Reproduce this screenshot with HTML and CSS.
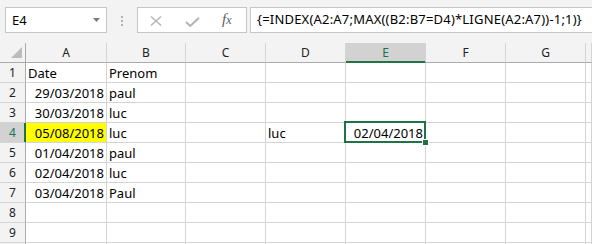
FILE: index.html
```html
<!DOCTYPE html>
<html lang="fr">
  <head>
    <meta charset="UTF-8">
    <title>Classeur1 - Excel</title>
    <link rel="stylesheet" href="styles.css">
  </head>
  <body>
    <div class="formula-bar">
      <div class="name-box">
        <span class="name-value">E4</span>
        <svg class="caret" width="7" height="4" viewBox="0 0 7 4"><path d="M0 0h7L3.5 4z" fill="#7b7b7b"/></svg>
      </div>
      <div class="grip"><i></i><i></i><i></i></div>
      <div class="fn-buttons">
        <svg class="btn-cancel" width="12" height="10" viewBox="0 0 12 10">
          <path d="M1 0.5L11 9.5M11 0.5L1 9.5" stroke="#b4b4b4" stroke-width="1.4" fill="none"/>
        </svg>
        <svg class="btn-enter" width="15" height="10" viewBox="0 0 15 10">
          <path d="M1 5L5.3 9L14 0.8" stroke="#b4b4b4" stroke-width="2" fill="none"/>
        </svg>
        <span class="fx">f<small>x</small></span>
      </div>
      <div class="formula">{=INDEX(A2:A7;MAX((B2:B7=D4)*LIGNE(A2:A7))-1;1)}</div>
    </div>

    <div class="sheet">
      <div class="hd corner">
        <svg width="26" height="19" viewBox="0 0 26 19"><path d="M22 4V15H11z" fill="#bcbcbc"/></svg>
      </div>
      <div class="hd">A</div>
      <div class="hd">B</div>
      <div class="hd">C</div>
      <div class="hd">D</div>
      <div class="hd sel-col">E</div>
      <div class="hd">F</div>
      <div class="hd">G</div>
      <div class="hd"></div>

      <div class="rh">1</div>
      <div class="cell">Date</div>
      <div class="cell">Prenom</div>
      <div class="cell"></div><div class="cell"></div><div class="cell"></div><div class="cell"></div><div class="cell"></div><div class="cell"></div>

      <div class="rh">2</div>
      <div class="cell num">29/03/2018</div>
      <div class="cell">paul</div>
      <div class="cell"></div><div class="cell"></div><div class="cell"></div><div class="cell"></div><div class="cell"></div><div class="cell"></div>

      <div class="rh">3</div>
      <div class="cell num">30/03/2018</div>
      <div class="cell">luc</div>
      <div class="cell"></div><div class="cell"></div><div class="cell"></div><div class="cell"></div><div class="cell"></div><div class="cell"></div>

      <div class="rh sel-row">4</div>
      <div class="cell num hl">05/08/2018</div>
      <div class="cell">luc</div>
      <div class="cell"></div>
      <div class="cell">luc</div>
      <div class="cell num active">02/04/2018<div class="cursor"><i class="handle"></i></div></div>
      <div class="cell"></div><div class="cell"></div><div class="cell"></div>

      <div class="rh">5</div>
      <div class="cell num">01/04/2018</div>
      <div class="cell">paul</div>
      <div class="cell"></div><div class="cell"></div><div class="cell"></div><div class="cell"></div><div class="cell"></div><div class="cell"></div>

      <div class="rh">6</div>
      <div class="cell num">02/04/2018</div>
      <div class="cell">luc</div>
      <div class="cell"></div><div class="cell"></div><div class="cell"></div><div class="cell"></div><div class="cell"></div><div class="cell"></div>

      <div class="rh">7</div>
      <div class="cell num">03/04/2018</div>
      <div class="cell">Paul</div>
      <div class="cell"></div><div class="cell"></div><div class="cell"></div><div class="cell"></div><div class="cell"></div><div class="cell"></div>

      <div class="rh">8</div>
      <div class="cell"></div><div class="cell"></div><div class="cell"></div><div class="cell"></div><div class="cell"></div><div class="cell"></div><div class="cell"></div><div class="cell"></div>

      <div class="rh">9</div>
      <div class="cell"></div><div class="cell"></div><div class="cell"></div><div class="cell"></div><div class="cell"></div><div class="cell"></div><div class="cell"></div><div class="cell"></div>

      <div class="rh"></div>
      <div class="cell"></div><div class="cell"></div><div class="cell"></div><div class="cell"></div><div class="cell"></div><div class="cell"></div><div class="cell"></div><div class="cell"></div>
    </div>
  </body>
</html>
```

FILE: styles.css
```css
* {
  box-sizing: border-box;
  margin: 0;
  padding: 0;
}

body {
  width: 592px;
  height: 244px;
  overflow: hidden;
  background: #f3f3f3;
  font-family: "Noto Sans", sans-serif;
  color: #000;
}

/* formula bar */
.formula-bar {
  display: flex;
  align-items: flex-start;
  height: 43px;
  padding: 7px 0 0 5px;
}

.name-box {
  display: flex;
  align-items: center;
  width: 102px;
  height: 26px;
  padding-left: 6px;
  background: #fff;
  border: 1px solid #c6c6c6;
  font-size: 13px;
  line-height: 23px;
}

.name-value {
  flex: 1;
}

.caret {
  margin: -1px 6px 0 0;
}

.grip {
  display: flex;
  flex-direction: column;
  gap: 2px;
  margin: 9px 14px 0 14px;
}

.grip i {
  width: 2px;
  height: 2px;
  background: #b3b3b3;
}

.fn-buttons {
  display: flex;
  align-items: flex-start;
  width: 110px;
  height: 26px;
  padding-left: 12px;
  background: #fff;
  border: 1px solid #c6c6c6;
}

.btn-cancel {
  margin-top: 8px;
}

.btn-enter {
  margin: 9px 0 0 23px;
}

.fx {
  margin-left: 22px;
  font-family: "Liberation Serif", serif;
  font-style: italic;
  font-size: 15px;
  line-height: 23px;
  color: #5c5c5c;
}

.fx small {
  font-size: 12px;
}

.formula {
  flex: 1;
  height: 26px;
  margin: 0 -10px 0 3px;
  padding-left: 6px;
  background: #fff;
  border: 1px solid #c6c6c6;
  font-size: 13px;
  line-height: 23px;
  letter-spacing: 0.2px;
  white-space: nowrap;
  overflow: hidden;
}

/* grid */
.sheet {
  display: grid;
  grid-template-columns: 26px 81px 79px 80px 80px 80px 80px 80px 1fr;
  grid-auto-rows: 20px;
  background: #fff;
}

.hd {
  background: #f3f3f3;
  border-right: 1px solid #d4d4d4;
  border-bottom: 1px solid #ababab;
  text-align: center;
  font-size: 12px;
  line-height: 19px;
  color: #222;
}

.corner {
  border-right-color: #ababab;
}

.corner svg {
  display: block;
}

.rh {
  background: #f3f3f3;
  border-right: 1px solid #ababab;
  border-bottom: 1px solid #d4d4d4;
  padding-top: 1px;
  text-align: center;
  font-size: 12px;
  line-height: 18px;
  color: #222;
}

.sel-col {
  background: #d2d2d2;
  color: #217346;
  border-bottom-color: #217346;
  box-shadow: inset 0 -1px #217346;
}

.sel-row {
  background: #d2d2d2;
  color: #217346;
  border-right-color: #217346;
  box-shadow: inset -1px 0 #217346;
}

.cell {
  border-right: 1px solid #d4d4d4;
  border-bottom: 1px solid #d4d4d4;
  padding: 2px 2px 0;
  font-size: 13px;
  line-height: 17px;
  white-space: nowrap;
}

.num {
  text-align: right;
}

.hl {
  background: #ffff00;
}

/* active cell cursor */
.active {
  position: relative;
}

.cursor {
  position: absolute;
  top: -2px;
  left: -2px;
  right: -1px;
  bottom: -1px;
  border: 2px solid #217346;
}

.handle {
  position: absolute;
  right: -5px;
  bottom: -5px;
  width: 7px;
  height: 7px;
  background: #217346;
  border: 1px solid #fff;
}
```
